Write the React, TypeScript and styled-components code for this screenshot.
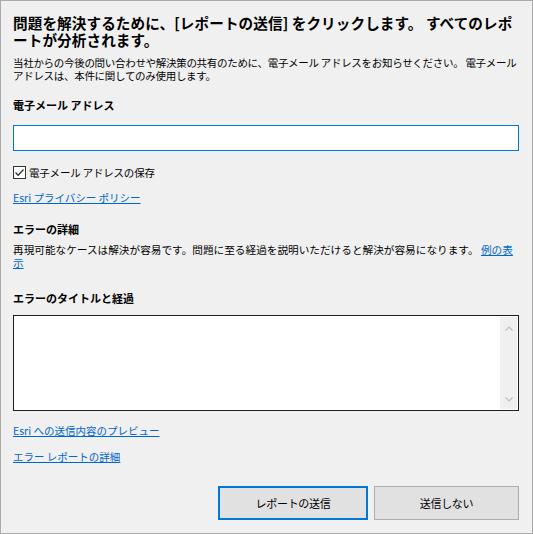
import React from "react"
import styled, { createGlobalStyle } from "styled-components"

const GlobalStyle = createGlobalStyle`
   html, body {
      margin: 0;
      padding: 0;
      background: #f0f0f0;
   }
   body {
      font-family: "Noto Sans CJK JP", "Noto Sans", sans-serif;
      color: #000;
   }
`

const Window = styled.div`
   width: 533px;
   height: 534px;
   box-sizing: border-box;
   border: 1px solid #ababab;
   background: #f0f0f0;
   padding: 0 13px 0 12px;
   display: flex;
   flex-direction: column;
`

const Title = styled.h1`
   margin: 13px 0 0;
   font-size: 14.6px;
   line-height: 17px;
   letter-spacing: 0.1px;
   font-weight: bold;
`

const Body = styled.p<{ $top: number; $tracking?: number; $size?: number }>`
   margin: ${({ $top }) => $top}px 0 0;
   font-size: ${({ $size }) => $size ?? 10.5}px;
   line-height: 13px;
   letter-spacing: ${({ $tracking }) => $tracking ?? 0}px;
`

const Label = styled.div<{ $top: number }>`
   margin-top: ${({ $top }) => $top}px;
   font-size: 11px;
   line-height: 14px;
   font-weight: bold;
`

const Link = styled.a<{ $top?: number }>`
   color: #0066cc;
   text-decoration: underline;
   text-underline-offset: 1px;
   cursor: pointer;
   ${({ $top }) => ($top !== undefined ? `display: block; width: fit-content; margin-top: ${$top}px; font-size: 10.5px; line-height: 13px;` : "")}
`

const EmailInput = styled.input`
   margin-top: 13px;
   height: 26px;
   box-sizing: border-box;
   width: 100%;
   border: 1px solid #0078d7;
   background: #fff;
   outline: none;
   padding: 0 4px;
   font: inherit;
   font-size: 11px;
`

const CheckRow = styled.label`
   margin-top: 15px;
   display: flex;
   align-items: center;
   gap: 3px;
   height: 13px;
   font-size: 10.5px;
   letter-spacing: -0.2px;
   line-height: 13px;
`

const CheckBox = styled.span`
   width: 13px;
   height: 13px;
   box-sizing: border-box;
   border: 1px solid #333;
   background: #fff;
   display: flex;
   align-items: center;
   justify-content: center;
`

const TextBox = styled.div`
   margin-top: 10px;
   height: 96px;
   box-sizing: border-box;
   border: 1px solid #1e1e1e;
   background: #fff;
   padding: 1px 1px 1px 0;
   display: flex;
`

const TextArea = styled.textarea`
   flex: 1;
   border: none;
   outline: none;
   resize: none;
   background: transparent;
   font: inherit;
   font-size: 11px;
`

const ScrollBar = styled.div`
   width: 17px;
   background: #f0f0f0;
   display: flex;
   flex-direction: column;
   justify-content: space-between;
   align-items: center;
   padding: 9px 0 7px;
   box-sizing: border-box;
`

const Buttons = styled.div`
   margin-top: 23px;
   display: flex;
   justify-content: flex-end;
   gap: 6px;
`

const Button = styled.button<{ $primary?: boolean; $width: number }>`
   width: ${({ $width }) => $width}px;
   height: 34px;
   box-sizing: border-box;
   background: #e1e1e1;
   border: ${({ $primary }) => ($primary ? "2px solid #0078d7" : "1px solid #adadad")};
   font-family: inherit;
   font-size: 11px;
   letter-spacing: -0.3px;
   color: #000;
   padding: 0;
`

const Chevron = ({ up }: { up?: boolean }) => (
   <svg width="8" height="5" viewBox="0 0 8 5">
      <path d={up ? "M0.5 4.5 L4 1 L7.5 4.5" : "M0.5 0.5 L4 4 L7.5 0.5"} fill="none" stroke="#bdbdbd" strokeWidth="1.2" />
   </svg>
)

export default function App() {
   return (
      <>
         <GlobalStyle />
         <Window>
            <Title>問題を解決するために、[レポートの送信] をクリックします。 すべてのレポートが分析されます。</Title>
            <Body $top={8} $tracking={-0.3}>
               当社からの今後の問い合わせや解決策の共有のために、電子メール アドレスをお知らせください。 電子メール アドレスは、本件に関してのみ使用します。
            </Body>
            <Label $top={16}>電子メール アドレス</Label>
            <EmailInput type="text" />
            <CheckRow>
               <CheckBox>
                  <svg width="11" height="11" viewBox="0 0 11 11">
                     <path d="M1.5 5.5 L4.2 8.3 L9.5 2.5" fill="none" stroke="#333" strokeWidth="1.3" />
                  </svg>
               </CheckBox>
               電子メール アドレスの保存
            </CheckRow>
            <Link $top={12}>Esri プライバシー ポリシー</Link>
            <Label $top={18}>エラーの詳細</Label>
            <Body $top={7} $size={10.65}>
               再現可能なケースは解決が容易です。問題に至る経過を説明いただけると解決が容易になります。 <Link>例の表示</Link>
            </Body>
            <Label $top={22}>エラーのタイトルと経過</Label>
            <TextBox>
               <TextArea />
               <ScrollBar>
                  <Chevron up />
                  <Chevron />
               </ScrollBar>
            </TextBox>
            <Link $top={13}>Esri への送信内容のプレビュー</Link>
            <Link $top={13}>エラー レポートの詳細</Link>
            <Buttons>
               <Button $primary $width={150}>レポートの送信</Button>
               <Button $width={145}>送信しない</Button>
            </Buttons>
         </Window>
      </>
   )
}
